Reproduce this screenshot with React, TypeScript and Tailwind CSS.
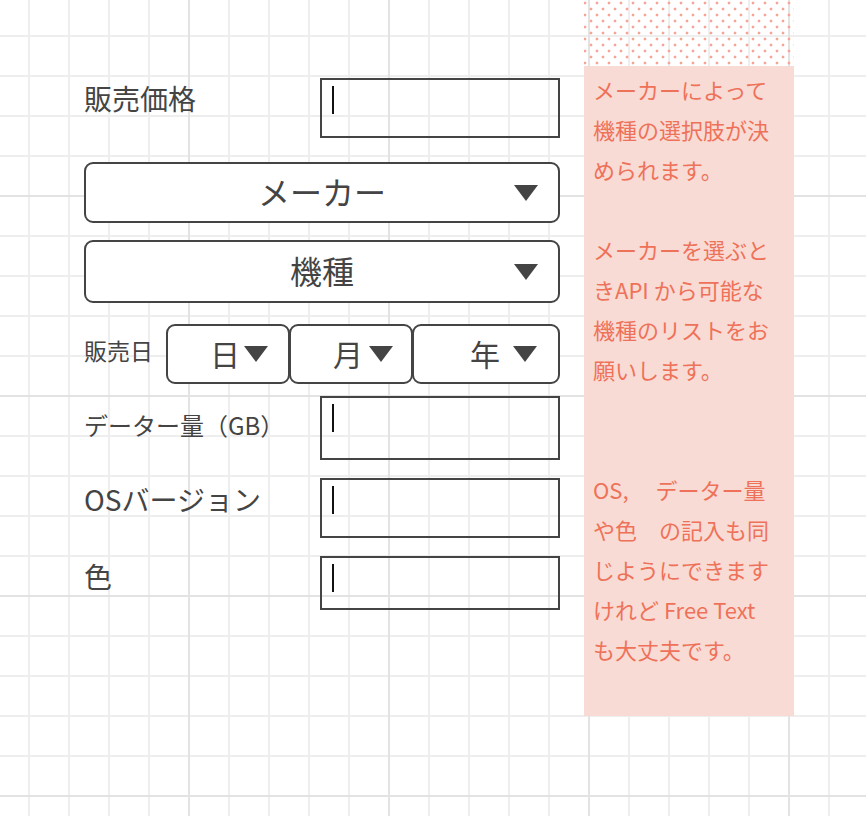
const Caret = () => (
  <svg width="24" height="16" viewBox="0 0 24 16" className="shrink-0">
    <path d="M0 0H24L12 16Z" fill="#444444" />
  </svg>
);

const SelectBox = ({ text, className }: { text: string; className: string }) => (
  <div
    className={`grid grid-cols-[1fr_auto_1fr] items-center border-2 border-[#444] rounded-[9px] bg-white ${className}`}
  >
    <span />
    <span className="leading-none mb-[4px]">{text}</span>
    <span className="justify-self-end mr-[20px] flex">
      <Caret />
    </span>
  </div>
);

const TextInput = ({ className }: { className: string }) => (
  <div className={`w-[240px] border-2 border-[#444] ${className}`}>
    <div className="ml-[10px] mt-[6px] w-[2px] h-[28px] bg-[#111]" />
  </div>
);

export default function App() {
  return (
    <div className="w-[866px] h-[816px] overflow-hidden bg-white flex font-['Noto_Sans_CJK_JP','Noto_Sans',sans-serif] text-[#444] [background-image:linear-gradient(to_right,#e3e3e3_2px,transparent_2px),linear-gradient(to_bottom,#e3e3e3_2px,transparent_2px),linear-gradient(to_right,#eeeeee_2px,transparent_2px),linear-gradient(to_bottom,#eeeeee_2px,transparent_2px)] [background-size:200px_200px,200px_200px,40px_40px,40px_40px] [background-position:188px_195px,188px_195px,28px_35px,28px_35px]">
      {/* form */}
      <div className="ml-[84px] w-[476px] pt-[78px] flex flex-col">
        <div className="flex h-[60px]">
          <div className="w-[236px] text-[28px] leading-[28px] pt-[6px]">販売価格</div>
          <TextInput className="h-[60px]" />
        </div>

        <SelectBox text="メーカー" className="mt-[24px] h-[61px] text-[32px]" />
        <SelectBox text="機種" className="mt-[17px] h-[63px] text-[32px]" />

        <div className="flex mt-[21px] h-[60px]">
          <div className="w-[82px] text-[23px] leading-[23px] pt-[15px]">販売日</div>
          <div className="w-[124px] h-full border-2 border-[#444] rounded-[9px] bg-white flex items-center justify-end pr-[20px] gap-[4px] text-[30px] leading-none">
            <span className="mb-[3px]">日</span>
            <Caret />
          </div>
          <div className="w-[124px] -ml-px h-full border-2 border-[#444] rounded-[9px] bg-white flex items-center justify-end pr-[18px] gap-[6px] text-[30px] leading-none">
            <span className="mb-[3px]">月</span>
            <Caret />
          </div>
          <div className="w-[148px] -ml-px h-full border-2 border-[#444] rounded-[9px] bg-white flex items-center justify-end pr-[21px] gap-[13px] text-[30px] leading-none">
            <span className="mb-[3px]">年</span>
            <Caret />
          </div>
        </div>

        <div className="flex mt-[12px] h-[64px]">
          <div className="w-[236px] text-[24px] leading-[24px] pt-[17px] whitespace-nowrap">データー量（GB）</div>
          <TextInput className="h-[64px]" />
        </div>

        <div className="flex mt-[18px] h-[60px]">
          <div className="w-[236px] text-[28px] leading-[28px] pt-[7px]">OSバージョン</div>
          <TextInput className="h-[60px]" />
        </div>

        <div className="flex mt-[18px] h-[54px]">
          <div className="w-[236px] text-[28px] leading-[28px] pt-[6px]">色</div>
          <TextInput className="h-[54px]" />
        </div>
      </div>

      {/* note */}
      <div className="ml-[24px] w-[210px] flex flex-col">
        <div className="h-[66px] [background-image:radial-gradient(circle,#f5a595_1.2px,transparent_1.7px),radial-gradient(circle,#f5a595_1.2px,transparent_1.7px)] [background-size:12px_12px] [background-position:-5px_-3px,1px_3px]" />
        <div className="h-[650px] bg-[#f9dbd5] pl-[9px] pt-[3px] text-[22px] leading-[40px] text-[#ee7259] whitespace-nowrap">
          <div>メーカーによって</div>
          <div>機種の選択肢が決</div>
          <div>められます。</div>
          <div>&nbsp;</div>
          <div>メーカーを選ぶと</div>
          <div>きAPI から可能な</div>
          <div>機種のリストをお</div>
          <div>願いします。</div>
          <div>&nbsp;</div>
          <div>&nbsp;</div>
          <div>OS,　 データー量</div>
          <div>や色　の記入も同</div>
          <div>じようにできます</div>
          <div>けれど Free Text</div>
          <div>も大丈夫です。</div>
        </div>
      </div>
    </div>
  );
}
